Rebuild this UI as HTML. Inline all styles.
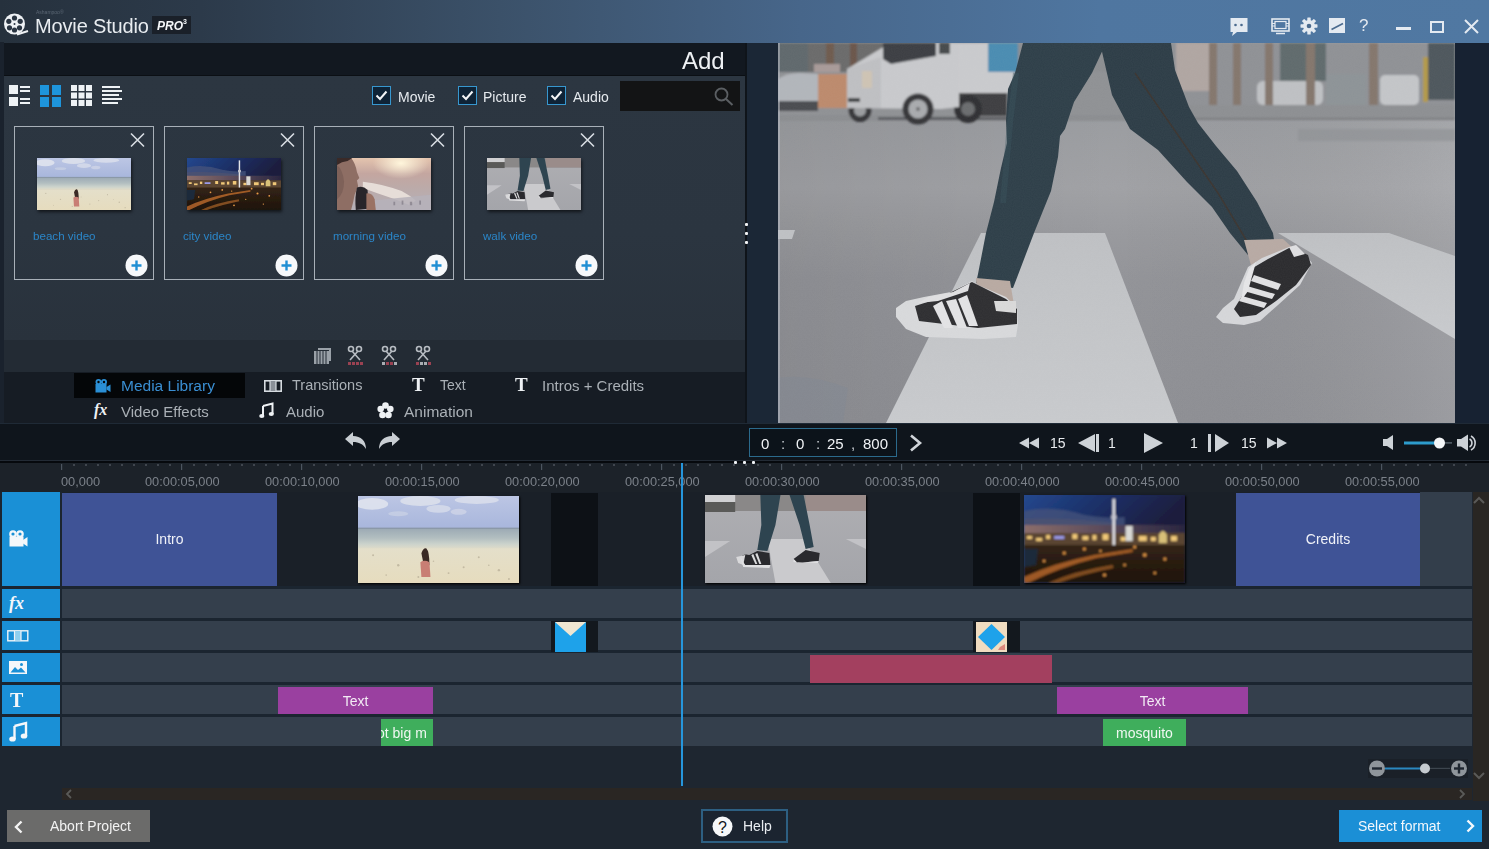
<!DOCTYPE html><html><head><meta charset="utf-8"><style>
*{margin:0;padding:0;box-sizing:border-box}
html,body{width:1489px;height:849px;overflow:hidden;background:#1e2630;font-family:"Liberation Sans",sans-serif;color:#e8ecf0}
.a{position:absolute}
.t{position:absolute;white-space:nowrap;line-height:1;will-change:transform}
svg{position:absolute;overflow:visible}
</style></head><body>
<div class="a" style="left:0;top:0;width:1489px;height:43px;background:linear-gradient(90deg,#26313d 0px,#2c3a4a 200px,#3b5169 500px,#47668a 800px,#4f76a0 1100px,#5078a2 1489px)"></div>
<svg style="left:3px;top:13px" width="26" height="23" viewBox="0 0 26 23">
<circle cx="11.5" cy="11" r="10.5" fill="#eef1f4"/>
<circle cx="11.5" cy="5" r="2.6" fill="#2a3542"/><circle cx="11.5" cy="17" r="2.6" fill="#2a3542"/>
<circle cx="5.8" cy="8.3" r="2.6" fill="#2a3542"/><circle cx="17.2" cy="8.3" r="2.6" fill="#2a3542"/>
<circle cx="6.5" cy="14.8" r="2.6" fill="#2a3542"/><circle cx="16.5" cy="14.8" r="2.6" fill="#2a3542"/>
<circle cx="11.5" cy="11" r="1" fill="#2a3542"/>
<path d="M14 21.5 L25 18" stroke="#eef1f4" stroke-width="2"/></svg>
<div class="t" style="left:36px;top:10px;font-size:5px;color:#5a6673">Ashampoo®</div>
<div class="t" style="left:35px;top:16px;font-size:20px;color:#e8ecf0;letter-spacing:-0.15px">Movie Studio</div>
<div class="a" style="left:152px;top:16px;width:39px;height:18px;background:#1a2029"></div>
<div class="t" style="left:157px;top:20px;font-size:12px;font-weight:bold;font-style:italic;color:#f4f6f8">PRO</div>
<div class="t" style="left:183px;top:18px;font-size:7px;font-weight:bold;color:#f4f6f8">3</div>
<svg style="left:1230px;top:17px" width="20" height="20" viewBox="0 0 20 20">
<rect x="0.5" y="1" width="17" height="14" fill="#e4eaf1"/><path d="M3 15 L2 19 L7 15Z" fill="#e4eaf1"/>
<circle cx="5.5" cy="8" r="1.3" fill="#4a6a8e"/><circle cx="11.5" cy="8" r="1.3" fill="#4a6a8e"/></svg>
<svg style="left:1271px;top:18px" width="20" height="17" viewBox="0 0 20 17">
<rect x="1" y="1" width="17" height="12" fill="none" stroke="#e4eaf1" stroke-width="1.6"/>
<rect x="4" y="3.5" width="11" height="7" fill="none" stroke="#e4eaf1" stroke-width="1.2"/>
<path d="M1 5.5h3M1 8h3M15 5.5h3M15 8h3" stroke="#e4eaf1" stroke-width="1"/>
<path d="M5 15.5h9" stroke="#e4eaf1" stroke-width="1.5"/></svg>
<svg style="left:1300px;top:17px" width="18" height="18" viewBox="0 0 18 18">
<g fill="#e4eaf1"><circle cx="9" cy="9" r="6"/>
<rect x="7.3" y="0.5" width="3.4" height="17" rx="0.6"/>
<rect x="7.3" y="0.5" width="3.4" height="17" rx="0.6" transform="rotate(45 9 9)"/>
<rect x="7.3" y="0.5" width="3.4" height="17" rx="0.6" transform="rotate(90 9 9)"/>
<rect x="7.3" y="0.5" width="3.4" height="17" rx="0.6" transform="rotate(135 9 9)"/></g>
<circle cx="9" cy="9" r="2.3" fill="#4a6a8e"/></svg>
<svg style="left:1329px;top:18px" width="16" height="16" viewBox="0 0 16 16">
<rect x="0" y="0" width="16" height="15" fill="#e4eaf1"/><path d="M2.5 11.5 L14 5.5" stroke="#4a6a8e" stroke-width="1.6"/></svg>
<div class="t" style="left:1359px;top:17px;font-size:17px;color:#e4eaf1">?</div>
<div class="a" style="left:1396px;top:27px;width:15px;height:3px;background:#e4eaf1"></div>
<div class="a" style="left:1430px;top:21px;width:14px;height:12px;border:2px solid #e4eaf1"></div>
<svg style="left:1464px;top:19px" width="15" height="15" viewBox="0 0 15 15"><path d="M1 1L14 14M14 1L1 14" stroke="#e4eaf1" stroke-width="2"/></svg>
<div class="a" style="left:0;top:42px;width:4px;height:381px;background:#1a222d"></div>
<div class="a" style="left:4px;top:43px;width:741px;height:32px;background:#121820"></div>
<div class="a" style="left:4px;top:75px;width:741px;height:1px;background:#0b0f14"></div>
<div class="a" style="left:4px;top:76px;width:741px;height:264px;background:linear-gradient(180deg,#2c3641 0%,#2b3540 60%,#29323c 100%)"></div>
<div class="a" style="left:4px;top:340px;width:741px;height:32px;background:#232b34"></div>
<div class="a" style="left:4px;top:372px;width:741px;height:51px;background:#161c24"></div>
<div class="t" style="left:682px;top:49px;font-size:24px;color:#eef1f4">Add</div>
<svg style="left:9px;top:85px" width="115" height="22" viewBox="0 0 115 22">
<g fill="#eef2f5"><rect x="0" y="0" width="9" height="9"/><rect x="0" y="12" width="9" height="9"/>
<rect x="11" y="1" width="10" height="2"/><rect x="11" y="5" width="10" height="2"/>
<rect x="11" y="13" width="10" height="2"/><rect x="11" y="17" width="10" height="2"/></g>
<g fill="#1e95dc"><rect x="31" y="0" width="9" height="10"/><rect x="43" y="0" width="9" height="10"/>
<rect x="31" y="12" width="9" height="10"/><rect x="43" y="12" width="9" height="10"/></g>
<g fill="#eef2f5"><rect x="62" y="0" width="6" height="6"/><rect x="69.5" y="0" width="6" height="6"/><rect x="77" y="0" width="6" height="6"/>
<rect x="62" y="7.5" width="6" height="6"/><rect x="69.5" y="7.5" width="6" height="6"/><rect x="77" y="7.5" width="6" height="6"/>
<rect x="62" y="15" width="6" height="6"/><rect x="69.5" y="15" width="6" height="6"/><rect x="77" y="15" width="6" height="6"/></g>
<g fill="#eef2f5"><rect x="93" y="1" width="18" height="2"/><rect x="93" y="5" width="20" height="2"/><rect x="93" y="9" width="17" height="2"/><rect x="93" y="13" width="20" height="2"/><rect x="93" y="17" width="16" height="2"/></g>
</svg>
<div class="a" style="left:372px;top:86px;width:19px;height:19px;border:1.5px solid #3797cf;background:#0f2336"></div>
<svg style="left:372px;top:86px" width="19" height="19" viewBox="0 0 19 19"><path d="M4.5 9.5 L8 13 L14.5 5.5" fill="none" stroke="#f2f4f6" stroke-width="2"/></svg>
<div class="t" style="left:398px;top:90px;font-size:14px;color:#e6eaee">Movie</div>
<div class="a" style="left:458px;top:86px;width:19px;height:19px;border:1.5px solid #3797cf;background:#0f2336"></div>
<svg style="left:458px;top:86px" width="19" height="19" viewBox="0 0 19 19"><path d="M4.5 9.5 L8 13 L14.5 5.5" fill="none" stroke="#f2f4f6" stroke-width="2"/></svg>
<div class="t" style="left:483px;top:90px;font-size:14px;color:#e6eaee">Picture</div>
<div class="a" style="left:547px;top:86px;width:19px;height:19px;border:1.5px solid #3797cf;background:#0f2336"></div>
<svg style="left:547px;top:86px" width="19" height="19" viewBox="0 0 19 19"><path d="M4.5 9.5 L8 13 L14.5 5.5" fill="none" stroke="#f2f4f6" stroke-width="2"/></svg>
<div class="t" style="left:573px;top:90px;font-size:14px;color:#e6eaee">Audio</div>
<div class="a" style="left:620px;top:81px;width:120px;height:30px;background:#131415"></div>
<svg style="left:714px;top:87px" width="20" height="19" viewBox="0 0 20 19"><circle cx="7.5" cy="7.5" r="6" fill="none" stroke="#5b5f63" stroke-width="1.8"/><path d="M12 12 L18.5 18" stroke="#5b5f63" stroke-width="2"/></svg>
<div class="a" style="left:14px;top:126px;width:140px;height:154px;border:1.5px solid #a8b0b8"></div>
<svg style="left:130px;top:133px" width="15" height="14" viewBox="0 0 15 14"><path d="M1 0.5L14 13.5M14 0.5L1 13.5" stroke="#d8dde2" stroke-width="1.6"/></svg>
<div class="a" style="left:37px;top:158px;width:94px;height:52px;box-shadow:1px 2px 3px rgba(0,0,0,0.6);overflow:hidden"><svg style="left:0;top:0" width="94" height="52" viewBox="0 0 160 88" preserveAspectRatio="none"><defs><linearGradient id="bsc0" x1="0" y1="0" x2="0" y2="1"><stop offset="0" stop-color="#bcc6e4"/><stop offset="1" stop-color="#a8b6dc"/></linearGradient>
<linearGradient id="bwc0" x1="0" y1="0" x2="0" y2="1"><stop offset="0" stop-color="#9caab4"/><stop offset="0.45" stop-color="#b2bec0"/><stop offset="0.75" stop-color="#ccd3cc"/><stop offset="1" stop-color="#e2ddc8"/></linearGradient>
<linearGradient id="bdc0" x1="0" y1="0" x2="0" y2="1"><stop offset="0" stop-color="#e4dfca"/><stop offset="1" stop-color="#e6dcbe"/></linearGradient></defs>
<rect width="160" height="33" fill="url(#bsc0)"/>
<ellipse cx="14" cy="8" rx="16" ry="6" fill="#e2e5ee" opacity="0.85"/><ellipse cx="62" cy="5" rx="20" ry="5" fill="#e0e3ec" opacity="0.8"/>
<ellipse cx="80" cy="13" rx="12" ry="4" fill="#dde1ec" opacity="0.7"/><ellipse cx="118" cy="4" rx="22" ry="4" fill="#e2e5ee" opacity="0.7"/>
<ellipse cx="100" cy="16" rx="8" ry="3" fill="#d8dcea" opacity="0.6"/><ellipse cx="40" cy="18" rx="10" ry="2.5" fill="#d6dbe8" opacity="0.5"/>
<rect y="32" width="160" height="1" fill="#8a98a6"/>
<rect y="33" width="160" height="21" fill="url(#bwc0)"/>
<rect y="53" width="160" height="35" fill="url(#bdc0)"/>
<g fill="#a89e88" opacity="0.55"><circle cx="15" cy="60" r="1"/><circle cx="40" cy="70" r="1.2"/><circle cx="90" cy="78" r="1"/><circle cx="120" cy="62" r="1"/><circle cx="140" cy="75" r="1.2"/><circle cx="60" cy="82" r="1"/><circle cx="105" cy="72" r="1"/><circle cx="28" cy="80" r="0.8"/><circle cx="75" cy="66" r="0.8"/><circle cx="150" cy="84" r="1"/><circle cx="130" cy="70" r="0.8"/></g>
<path d="M63 58 Q65 52 68 53 Q71 56 71 70 L65 68Z" fill="#3a2a25"/>
<path d="M62 67 Q66 64 71 67 L72 82 L63 82Z" fill="#c87e74"/></svg></div>
<div class="t" style="left:33px;top:230px;font-size:11.6px;color:#2b86c8">beach video</div>
<svg style="left:125px;top:254px" width="23" height="23" viewBox="0 0 23 23"><circle cx="11.5" cy="11.5" r="11" fill="#f6f8fa"/><path d="M11.5 6.5v10M6.5 11.5h10" stroke="#1e8ed4" stroke-width="2.4"/></svg>
<div class="a" style="left:164px;top:126px;width:140px;height:154px;border:1.5px solid #a8b0b8"></div>
<svg style="left:280px;top:133px" width="15" height="14" viewBox="0 0 15 14"><path d="M1 0.5L14 13.5M14 0.5L1 13.5" stroke="#d8dde2" stroke-width="1.6"/></svg>
<div class="a" style="left:187px;top:158px;width:94px;height:52px;box-shadow:1px 2px 3px rgba(0,0,0,0.6);overflow:hidden"><svg style="left:0;top:0" width="94" height="52" viewBox="0 0 160 88" preserveAspectRatio="none"><defs><linearGradient id="csc1" x1="0" y1="0" x2="1" y2="0.2"><stop offset="0" stop-color="#24488e"/><stop offset="0.55" stop-color="#1a2e64"/><stop offset="1" stop-color="#1a1e3e"/></linearGradient>
<linearGradient id="cbc1" x1="0" y1="0" x2="0" y2="1"><stop offset="0" stop-color="#3a2818"/><stop offset="1" stop-color="#1e140c"/></linearGradient>
<linearGradient id="chc1" x1="0" y1="0" x2="1" y2="0"><stop offset="0" stop-color="#8c6e6a"/><stop offset="0.5" stop-color="#5a4a5a"/><stop offset="1" stop-color="#2a2640"/></linearGradient>
<filter id="cfc1" x="-5%" y="-5%" width="110%" height="110%"><feGaussianBlur stdDeviation="0.9"/></filter></defs>
<rect width="160" height="88" fill="url(#csc1)"/>
<g filter="url(#cfc1)">
<rect width="160" height="30" fill="url(#csc1)"/>
<path d="M0 16 Q30 10 60 20 Q80 24 100 22 L100 30 Q60 32 0 28Z" fill="#44527a" opacity="0.8"/>
<path d="M0 24 Q40 22 90 28 L90 34 L0 34Z" fill="#4e5270" opacity="0.8"/>
<rect y="30" width="160" height="10" fill="url(#chc1)"/>
<rect y="38" width="160" height="50" fill="url(#cbc1)"/>
<rect y="38" width="160" height="12" fill="#5a4432"/>
<g fill="#f0c878"><rect x="3" y="41" width="5" height="3"/><rect x="12" y="43" width="6" height="3"/><rect x="22" y="40" width="4" height="4"/><rect x="30" y="41" width="10" height="3" fill="#9a9ae8"/><rect x="48" y="39" width="5" height="5"/><rect x="58" y="41" width="6" height="4"/><rect x="68" y="40" width="4" height="5"/><rect x="78" y="39" width="6" height="6"/><rect x="96" y="42" width="5" height="4"/><rect x="114" y="41" width="8" height="5"/><rect x="126" y="42" width="5" height="4"/><rect x="146" y="41" width="6" height="5"/></g>
<g fill="#e89a48"><circle cx="40" cy="58" r="1.5"/><circle cx="60" cy="54" r="1.5"/><circle cx="76" cy="56" r="1.2"/><circle cx="110" cy="52" r="1.5"/><circle cx="120" cy="60" r="1.8"/><circle cx="140" cy="64" r="1.5"/><circle cx="80" cy="80" r="1.5"/><circle cx="130" cy="78" r="1.2"/><circle cx="100" cy="70" r="1.2"/><circle cx="20" cy="66" r="1.2"/></g>
<path d="M0 82 Q30 68 70 60 L108 54 L108 57 L72 63 Q36 72 4 88 L0 88Z" fill="#c8702e" opacity="0.75"/>
<path d="M24 88 Q50 76 88 70 L89 73 Q58 79 34 88Z" fill="#d07a30" opacity="0.55"/>
<path d="M0 54 L14 54 L12 70 L0 72Z" fill="#1e2a3a"/>
<rect x="88" y="4" width="2.5" height="46" fill="#e4e4e8"/><circle cx="89.3" cy="22" r="2.6" fill="#c8c8d0"/>
<rect x="101" y="31" width="7" height="15" fill="#d8d8d4"/><path d="M134 40 Q138 32 142 40 L142 48 L134 48Z" fill="#d8c078"/>
</g></svg></div>
<div class="t" style="left:183px;top:230px;font-size:11.6px;color:#2b86c8">city video</div>
<svg style="left:275px;top:254px" width="23" height="23" viewBox="0 0 23 23"><circle cx="11.5" cy="11.5" r="11" fill="#f6f8fa"/><path d="M11.5 6.5v10M6.5 11.5h10" stroke="#1e8ed4" stroke-width="2.4"/></svg>
<div class="a" style="left:314px;top:126px;width:140px;height:154px;border:1.5px solid #a8b0b8"></div>
<svg style="left:430px;top:133px" width="15" height="14" viewBox="0 0 15 14"><path d="M1 0.5L14 13.5M14 0.5L1 13.5" stroke="#d8dde2" stroke-width="1.6"/></svg>
<div class="a" style="left:337px;top:158px;width:94px;height:52px;box-shadow:1px 2px 3px rgba(0,0,0,0.6);overflow:hidden"><svg style="left:0;top:0" width="94" height="52" viewBox="0 0 160 88" preserveAspectRatio="none"><defs><linearGradient id="msc2" x1="0" y1="0" x2="0" y2="1"><stop offset="0" stop-color="#e4c4ae"/><stop offset="0.3" stop-color="#c4a6a0"/><stop offset="0.55" stop-color="#bcaaa8"/><stop offset="1" stop-color="#b4b0b8"/></linearGradient>
<radialGradient id="mnc2" cx="0.68" cy="0.1" r="0.3"><stop offset="0" stop-color="#fff6dc"/><stop offset="1" stop-color="#fff6dc" stop-opacity="0"/></radialGradient></defs>
<rect width="160" height="88" fill="url(#msc2)"/>
<rect width="160" height="88" fill="url(#mnc2)"/>
<path d="M44 40 Q80 44 110 56 Q125 64 134 72 L124 80 Q96 68 70 60 Q52 54 44 50Z" fill="#e6ddd8"/>
<path d="M60 72 L160 62 L160 88 L62 88Z" fill="#b6b2ba" opacity="0.85"/>
<g fill="#6a6470" opacity="0.5"><rect x="96" y="74" width="3" height="6"/><rect x="110" y="72" width="3" height="7"/><rect x="124" y="74" width="4" height="6"/><rect x="140" y="72" width="3" height="7"/></g>
<path d="M0 0 L24 0 Q32 10 34 24 L38 34 L34 38 L36 48 L30 62 Q28 74 24 88 L0 88Z" fill="#8e6e64"/>
<path d="M0 0 L26 0 L18 5 Q8 6 0 12Z" fill="#3a2a28"/>
<path d="M0 12 Q10 20 12 40 Q12 60 0 70Z" fill="#6e544e" opacity="0.5"/>
<path d="M34 50 Q44 46 52 54 L54 86 L32 88 Q30 66 34 50Z" fill="#28252a"/>
<path d="M50 60 Q60 58 64 70 L66 88 L50 88Z" fill="#9a7264"/></svg></div>
<div class="t" style="left:333px;top:230px;font-size:11.6px;color:#2b86c8">morning video</div>
<svg style="left:425px;top:254px" width="23" height="23" viewBox="0 0 23 23"><circle cx="11.5" cy="11.5" r="11" fill="#f6f8fa"/><path d="M11.5 6.5v10M6.5 11.5h10" stroke="#1e8ed4" stroke-width="2.4"/></svg>
<div class="a" style="left:464px;top:126px;width:140px;height:154px;border:1.5px solid #a8b0b8"></div>
<svg style="left:580px;top:133px" width="15" height="14" viewBox="0 0 15 14"><path d="M1 0.5L14 13.5M14 0.5L1 13.5" stroke="#d8dde2" stroke-width="1.6"/></svg>
<div class="a" style="left:487px;top:158px;width:94px;height:52px;box-shadow:1px 2px 3px rgba(0,0,0,0.6);overflow:hidden"><svg style="left:0;top:0" width="94" height="52" viewBox="0 0 160 88" preserveAspectRatio="none"><defs><linearGradient id="wrc3" x1="0" y1="0" x2="0" y2="1"><stop offset="0" stop-color="#aeaeb2"/><stop offset="1" stop-color="#a4a5aa"/></linearGradient></defs>
<rect width="160" height="88" fill="url(#wrc3)"/>
<rect width="160" height="16" fill="#8a8888"/>
<rect width="30" height="7" fill="#d0d0d2"/><rect y="7" width="30" height="10" fill="#5a5a58"/>
<rect x="100" width="60" height="16" fill="#9a8c8a"/>
<path d="M62 44 L98 44 L125 88 L70 88Z" fill="#cacacd"/>
<path d="M0 46 L25 46 L0 62Z" fill="#c2c2c6"/><path d="M140 44 L160 44 L160 54Z" fill="#c2c2c6"/>
<path d="M55 0 L75 0 L70 30 L62 56 L52 55 L56 30Z" fill="#2e4450"/>
<path d="M84 0 L98 0 L104 30 L108 52 L100 54 L94 30Z" fill="#2e4450"/>
<path d="M33 64 Q38 58 44 60 L52 56 L64 58 L65 70 L40 70Z" fill="#2a2a2e"/><path d="M31 62 L40 60 L38 70 L33 68Z" fill="#d8d8da"/><path d="M35 62 L40 70 L65 70 L64 73 L38 72Z" fill="#e0e0e2"/>
<g fill="#dcdcde"><path d="M46 60 L48 59 L52 69 L50 69Z"/><path d="M50 59 L52 58 L56 69 L54 69Z"/></g>
<path d="M88 64 L100 55 L114 58 L113 66 L92 68Z" fill="#2a2a2e"/><path d="M88 64 L92 68 L113 66 L112 68 L88 67Z" fill="#e0e0e2"/></svg></div>
<div class="t" style="left:483px;top:230px;font-size:11.6px;color:#2b86c8">walk video</div>
<svg style="left:575px;top:254px" width="23" height="23" viewBox="0 0 23 23"><circle cx="11.5" cy="11.5" r="11" fill="#f6f8fa"/><path d="M11.5 6.5v10M6.5 11.5h10" stroke="#1e8ed4" stroke-width="2.4"/></svg>
<svg style="left:313px;top:345px" width="125" height="22" viewBox="0 0 125 22">
<g fill="#9aa1a8"><rect x="1" y="6" width="15" height="13"/><path d="M5 3h13v13h-2V5H5z"/></g>
<g stroke="#232b34" stroke-width="1"><path d="M4 6v13M7 6v13M10 6v13M13 6v13"/></g>
<g stroke="#b7bcc2" stroke-width="1.6" fill="none"><circle cx="38" cy="4" r="2.5"/><circle cx="46" cy="4" r="2.5"/><path d="M39 6L47 15M45 6L37 15"/></g>
<g fill="#9a4252"><rect x="35" y="17" width="3" height="3"/><rect x="39" y="17" width="3" height="3"/><rect x="43" y="17" width="3" height="3"/><rect x="47" y="17" width="3" height="3"/></g>
<g stroke="#b7bcc2" stroke-width="1.6" fill="none"><circle cx="72" cy="4" r="2.5"/><circle cx="80" cy="4" r="2.5"/><path d="M73 6L81 15M79 6L71 15"/></g>
<g><rect x="69" y="17" width="3" height="3" fill="#a9aeb3"/><rect x="73" y="17" width="3" height="3" fill="#9a4252"/><rect x="77" y="17" width="3" height="3" fill="#9a4252"/><rect x="81" y="17" width="3" height="3" fill="#a9aeb3"/></g>
<g stroke="#b7bcc2" stroke-width="1.6" fill="none"><circle cx="106" cy="4" r="2.5"/><circle cx="114" cy="4" r="2.5"/><path d="M107 6L115 15M113 6L105 15"/></g>
<g><rect x="103" y="17" width="3" height="3" fill="#9a4252"/><rect x="107" y="17" width="3" height="3" fill="#a9aeb3"/><rect x="111" y="17" width="3" height="3" fill="#a9aeb3"/><rect x="115" y="17" width="3" height="3" fill="#9a4252"/></g>
</svg>
<div class="a" style="left:74px;top:373px;width:171px;height:25px;background:#040608"></div>
<svg style="left:95px;top:379px" width="16" height="14" viewBox="0 0 16 14"><g fill="#2a8fd6"><circle cx="3.5" cy="3" r="3"/><circle cx="9" cy="3" r="3"/><rect x="0.5" y="5" width="11" height="8.5"/><path d="M11.5 8 L15.5 5.5 V13 L11.5 10.5z"/></g><circle cx="3.5" cy="3" r="1.2" fill="#040608"/><circle cx="9" cy="3" r="1.2" fill="#040608"/></svg>
<div class="t" style="left:121px;top:378px;font-size:15.5px;color:#3a8ed2">Media Library</div>
<svg style="left:94px;top:402px" width="18" height="17" viewBox="0 0 18 17"><text x="0" y="13" font-family="Liberation Serif" font-style="italic" font-weight="bold" font-size="16" fill="#eef1f4">fx</text></svg>
<div class="t" style="left:121px;top:404px;font-size:15px;color:#aab0b6">Video Effects</div>
<svg style="left:264px;top:380px" width="18" height="12" viewBox="0 0 18 12"><rect x="0.8" y="0.8" width="16.4" height="10.4" fill="none" stroke="#d6dbe0" stroke-width="1.6"/><rect x="6" y="1" width="6" height="10" fill="#8a9098"/><path d="M6 1v10M12 1v10" stroke="#d6dbe0" stroke-width="1.2"/></svg>
<div class="t" style="left:292px;top:378px;font-size:14.5px;color:#aab0b6">Transitions</div>
<svg style="left:259px;top:403px" width="15" height="15" viewBox="0 0 15 15"><path d="M4 3 L13.5 0.5 V11" fill="none" stroke="#eef1f4" stroke-width="2"/><path d="M4 3V13" stroke="#eef1f4" stroke-width="2"/><ellipse cx="2.8" cy="13" rx="2.6" ry="2" fill="#eef1f4"/><ellipse cx="12.3" cy="11" rx="2.6" ry="2" fill="#eef1f4"/></svg>
<div class="t" style="left:286px;top:404px;font-size:15px;color:#aab0b6">Audio</div>
<div class="t" style="left:412px;top:375px;font-size:19px;font-weight:bold;font-family:'Liberation Serif',serif;color:#eef1f4">T</div>
<div class="t" style="left:440px;top:378px;font-size:14px;color:#aab0b6">Text</div>
<div class="t" style="left:515px;top:375px;font-size:19px;font-weight:bold;font-family:'Liberation Serif',serif;color:#eef1f4">T</div>
<div class="t" style="left:542px;top:378px;font-size:15px;color:#aab0b6">Intros + Credits</div>
<svg style="left:377px;top:402px" width="17" height="17" viewBox="0 0 17 17"><g fill="#eef1f4"><circle cx="8.5" cy="3.5" r="3.3"/><circle cx="13.3" cy="7" r="3.3"/><circle cx="11.5" cy="13" r="3.3"/><circle cx="5.5" cy="13" r="3.3"/><circle cx="3.7" cy="7" r="3.3"/></g><circle cx="8.5" cy="8.8" r="1.8" fill="#161c24"/></svg>
<div class="t" style="left:404px;top:404px;font-size:15.5px;color:#aab0b6">Animation</div>
<div class="a" style="left:745px;top:43px;width:2px;height:380px;background:#0f141a"></div>
<div class="a" style="left:747px;top:43px;width:31px;height:380px;background:#1b2736"></div>
<div class="a" style="left:1455px;top:43px;width:34px;height:380px;background:#172232"></div>
<div class="a" style="left:778px;top:43px;width:677px;height:380px;overflow:hidden;background:#8e9194"><svg style="left:0;top:0" width="677" height="380" viewBox="0 0 677 380">
<defs>
<linearGradient id="rd" x1="0" y1="0" x2="0" y2="1"><stop offset="0.2" stop-color="#9a9ca0"/><stop offset="0.38" stop-color="#a0a1a5"/><stop offset="0.5" stop-color="#98999d"/><stop offset="0.62" stop-color="#929398"/><stop offset="1" stop-color="#8f9095"/></linearGradient>
<linearGradient id="st" x1="0" y1="0" x2="0" y2="1"><stop offset="0" stop-color="#bfc1c4"/><stop offset="1" stop-color="#c9cbce"/></linearGradient>
<filter id="nz" x="0" y="0" width="100%" height="100%"><feTurbulence type="fractalNoise" baseFrequency="0.9" numOctaves="1" seed="3"/><feColorMatrix values="0 0 0 0 0.5  0 0 0 0 0.5  0 0 0 0 0.5  0 0 0 0.12 0"/><feComposite in2="SourceGraphic" operator="in"/></filter>
<filter id="bgb" x="-2%" y="-5%" width="104%" height="110%"><feGaussianBlur stdDeviation="0.8"/></filter>
</defs>
<rect width="677" height="380" fill="url(#rd)"/>
<linearGradient id="rh" x1="0" y1="0" x2="1" y2="0"><stop offset="0" stop-color="#000" stop-opacity="0.06"/><stop offset="0.5" stop-color="#000" stop-opacity="0"/><stop offset="1" stop-color="#fff" stop-opacity="0.1"/></linearGradient>
<rect y="0" width="677" height="380" fill="url(#rh)"/>
<g filter="url(#bgb)"><!-- background band -->
<rect x="0" y="0" width="677" height="76" fill="#8c8e91"/>
<rect x="0" y="0" width="105" height="30" fill="#6a6a6a"/>
<rect x="0" y="0" width="30" height="30" fill="#5e686c"/>
<rect x="48" y="0" width="8" height="28" fill="#6e5a4e"/><rect x="72" y="0" width="7" height="26" fill="#6a5448"/>
<rect x="36" y="21" width="26" height="8" fill="#a89a98"/>
<rect x="0" y="29" width="392" height="44" fill="#8f9194"/>
<path d="M0 36 Q8 30 22 30 L40 31 L40 62 L0 64Z" fill="#b2b6bb"/>
<rect x="0" y="58" width="40" height="10" fill="#4a4c50"/>
<rect x="40" y="31" width="29" height="34" fill="#bd8a6c"/>
<rect x="0" y="72" width="392" height="6" fill="#8b8d90"/>
<rect x="100" y="74" width="130" height="3" fill="#5a5c60"/>
<circle cx="82" cy="67.5" r="11.5" fill="#343538"/><circle cx="82" cy="67.5" r="6" fill="#9a9c9f"/>
<rect x="180" y="49" width="49" height="24" fill="#3c3d40"/>
<circle cx="190" cy="66" r="14" fill="#2e2f32"/><circle cx="190" cy="66" r="7" fill="#6a6c6e"/>
<path d="M69 26 L112 0 L181 0 L181 64 L163 66 L69 65Z" fill="#c9cacd"/>
<path d="M69 26 L103 14 L103 65 L69 65Z" fill="#bfc0c3"/>
<path d="M105 0 L158 0 L158 13 L113 21 L105 16Z" fill="#3a3d42"/>
<rect x="161" y="0" width="11" height="11" fill="#45484c"/>
<rect x="84" y="28" width="10" height="17" fill="#cfc4b4"/>
<rect x="70" y="55" width="12" height="4" fill="#3a3c40"/>
<rect x="181" y="0" width="55" height="50" fill="#cacbce"/>
<rect x="210" y="0" width="30" height="29" fill="#4a8cb2"/>
<circle cx="140" cy="66" r="15.5" fill="#343538"/><circle cx="140" cy="66" r="9.5" fill="#a9abae"/><circle cx="140" cy="66" r="2" fill="#6a6c6e"/>
<rect x="392" y="0" width="285" height="62" fill="#8f9195"/>
<rect x="398" y="0" width="40" height="48" fill="#b0a6a2"/>
<rect x="502" y="0" width="46" height="38" fill="#5e6b6c"/>
<rect x="650" y="0" width="27" height="57" fill="#4e565c"/>
<rect x="479" y="38" width="66" height="24" rx="6" fill="#bfc1c4"/>
<rect x="548" y="31" width="40" height="42" fill="#8d9397"/>
<rect x="602" y="32" width="39" height="30" rx="5" fill="#c4c6c9"/>
<rect x="645" y="14" width="5" height="45" fill="#b39a48"/>
<g fill="#84766c"><rect x="431" y="0" width="8" height="70"/><rect x="455" y="0" width="8" height="70"/><rect x="487" y="0" width="8" height="72"/><rect x="528" y="0" width="9" height="75"/><rect x="591" y="0" width="9" height="74"/></g>
<rect x="392" y="62" width="285" height="14" fill="#8d8f92"/>
<rect x="392" y="75" width="285" height="2" fill="#7a7c80"/>

<rect x="520" y="86" width="157" height="12" fill="#8f9195" opacity="0.7"/>
</g>
<!-- crosswalk -->
<path d="M203 190 L327 190 L400 380 L108 380Z" fill="url(#st)"/>
<path d="M500 190 L611 190 L677 213 L677 296Z" fill="url(#st)"/>
<path d="M0 187 L17 187 L14 196 L0 196Z" fill="#bfc1c4"/>
<path d="M0 335 Q30 330 70 345 L65 380 L0 380Z" fill="#7e8694" opacity="0.35"/>
<!-- legs -->
<path d="M245 0 L237 30 L230 46 L228 77 L229 100 L223 125 L216 159 L208 190 L200 231 L198 240 L235 245 L256 190 L273 148 L280 114 L282 93 L287 86 L296 59 L314 30 L328 0Z" fill="#2d3e48"/>
<path d="M322 0 L393 0 L397 27 L411 64 L420 80 L438 103 L459 128 L479 159 L495 190 L498 210 L470 212 L452 190 L434 164 L409 139 L380 107 L352 86 L334 52Z" fill="#2c3c46"/>
<path d="M357 30 L440 150 L470 200" fill="none" stroke="#3a3430" stroke-width="1.5"/>
<path d="M238 30 L232 80 L225 160" fill="none" stroke="#3a5660" stroke-width="6" opacity="0.35"/>
<!-- left shoe -->
<path d="M198 235 L232 238 L236 262 L200 264Z" fill="#b9aaa2"/>
<path d="M118 265 L128 258 L146 254 L173 249 L194 238 L200 242 L228 254 L239 265 L240 281 L238 294 L205 296 L148 294 L128 286 L118 274Z" fill="#d9dadc"/>
<path d="M137 263 L159 256 L194 239 L228 256 L239 266 L239 281 L200 285 L141 278Z" fill="#2d2d30"/>
<g fill="#e4e4e6"><path d="M155 263 L164 258 L175 285 L166 285Z"/><path d="M168 258 L178 256 L189 285 L180 285Z"/><path d="M180 256 L189 252 L200 283 L191 283Z"/></g>
<path d="M140 260 L150 254 L175 249 L192 240 L190 248 L160 258Z" fill="#e0e0e2"/>
<path d="M216 258 L238 258 L238 270 L218 268Z" fill="#dadada"/>
<!-- right shoe -->
<path d="M466 197 L505 196 L516 206 L500 222 L474 226Z" fill="#b8aaa4"/>
<path d="M438 274 L445 265 L456 256 L470 224 L484 215 L511 204 L527 211 L534 220 L522 242 L500 262 L482 278 L466 282 L445 280Z" fill="#d6d7da"/>
<path d="M456 266 L466 250 L473 226 L490 216 L513 204 L530 212 L533 222 L518 242 L498 258 L478 272 L462 274Z" fill="#2a2a2d"/>
<g fill="#e2e2e4"><path d="M476 232 L503 241 L500 247 L473 238Z"/><path d="M469 243 L497 251 L494 256 L466 248Z"/><path d="M464 253 L489 260 L486 265 L461 258Z"/></g>
<path d="M471 226 L478 219 L470 248 L463 258 L466 240Z" fill="#e6e6e8"/>
<path d="M511 204 L518 202 L527 211 L516 214Z" fill="#e0e0e2"/>
<rect width="677" height="380" filter="url(#nz)" opacity="0.6"/>
</svg><div class="a" style="left:0;top:0;width:2px;height:380px;background:rgba(190,196,206,0.45)"></div></div>
<div class="a" style="left:745px;top:223px;width:3px;height:3px;border-radius:1px;background:#f0f2f4;box-shadow:0 9px 0 #f0f2f4,0 18px 0 #f0f2f4"></div>
<div class="a" style="left:0;top:423px;width:1489px;height:38px;background:#0f151c"></div>
<div class="a" style="left:0;top:423px;width:1489px;height:1px;background:#1f2a36"></div>
<svg style="left:345px;top:432px" width="56" height="20" viewBox="0 0 56 20">
<path d="M0 7 L8 0 V4 C16 4 21 9 21 17 C18 12 14 10 8 10 V14Z" fill="#c9ced3"/>
<path d="M55 7 L47 0 V4 C39 4 34 9 34 17 C37 12 41 10 47 10 V14Z" fill="#c9ced3"/></svg>
<div class="a" style="left:749px;top:428px;width:148px;height:29px;border:1.5px solid #2b6a8c;background:#0c131a"></div>
<div class="t" style="left:761px;top:436px;font-size:15px;color:#f0f3f6">0</div>
<div class="t" style="left:781px;top:436px;font-size:15px;color:#c8cdd2">:</div>
<div class="t" style="left:796px;top:436px;font-size:15px;color:#f0f3f6">0</div>
<div class="t" style="left:816px;top:436px;font-size:15px;color:#c8cdd2">:</div>
<div class="t" style="left:827px;top:436px;font-size:15px;color:#f0f3f6">25</div>
<div class="t" style="left:851px;top:436px;font-size:15px;color:#c8cdd2">,</div>
<div class="t" style="left:863px;top:436px;font-size:15px;color:#f0f3f6">800</div>
<svg style="left:909px;top:434px" width="14" height="18" viewBox="0 0 14 18"><path d="M2 1.5 L11 9 L2 16.5" fill="none" stroke="#d0d5da" stroke-width="2.6"/></svg>
<svg style="left:1019px;top:432px" width="270" height="22" viewBox="0 0 270 22">
<path d="M0 11 L10 5.5 V16.5Z M10 11 L20 5.5 V16.5Z" fill="#cdd2d7"/>
<path d="M59 11 L76 2 V20Z" fill="#cdd2d7"/><rect x="77" y="2" width="3" height="18" fill="#cdd2d7"/>
<path d="M125 1 L144 11 L125 21Z" fill="#cdd2d7"/>
<rect x="189" y="2" width="3" height="18" fill="#cdd2d7"/><path d="M196 2 L210 11 L196 20Z" fill="#cdd2d7"/>
<path d="M248 5.5 L258 11 L248 16.5Z M258 5.5 L268 11 L258 16.5Z" fill="#cdd2d7"/></svg>
<div class="t" style="left:1050px;top:436px;font-size:14px;color:#e8ebee">15</div>
<div class="t" style="left:1108px;top:436px;font-size:14px;color:#e8ebee">1</div>
<div class="t" style="left:1190px;top:436px;font-size:14px;color:#e8ebee">1</div>
<div class="t" style="left:1241px;top:436px;font-size:14px;color:#e8ebee">15</div>
<svg style="left:1383px;top:434px" width="95" height="18" viewBox="0 0 95 18">
<path d="M0 5 H4 L10 1 V16 L4 12 H0Z" fill="#cdd2d7"/>
<rect x="21" y="7.5" width="36" height="3" fill="#2d9ccc"/><rect x="57" y="8.2" width="12" height="1.4" fill="#5b6670"/>
<circle cx="56.5" cy="9" r="5.5" fill="#f4f6f8"/>
<path d="M74 5 H78 L85 0.5 V17 L78 12.5 H74Z" fill="#cdd2d7"/>
<path d="M86.5 5 A4.5 4.5 0 0 1 86.5 13" fill="none" stroke="#cdd2d7" stroke-width="1.6"/>
<path d="M88 2 A8 8 0 0 1 88 16" fill="none" stroke="#cdd2d7" stroke-width="1.6"/></svg>
<div class="a" style="left:0;top:460px;width:1489px;height:1px;background:#232b35"></div><div class="a" style="left:0;top:461px;width:1489px;height:2px;background:#06090d"></div>
<div class="a" style="left:0;top:463px;width:1489px;height:29px;background:#1c2229"></div>
<svg style="left:0;top:0" width="1489" height="849" viewBox="0 0 1489 849"><rect x="61.0" y="464" width="1.2" height="6" fill="#4c5560"/><rect x="73.0" y="464" width="2" height="2" fill="#40464e"/><rect x="85.0" y="464" width="2" height="2" fill="#40464e"/><rect x="97.0" y="464" width="2" height="2" fill="#40464e"/><rect x="109.0" y="464" width="2" height="2" fill="#40464e"/><rect x="121.0" y="464" width="2" height="2" fill="#40464e"/><rect x="133.0" y="464" width="2" height="2" fill="#40464e"/><rect x="145.0" y="464" width="2" height="2" fill="#40464e"/><rect x="157.0" y="464" width="2" height="2" fill="#40464e"/><rect x="169.0" y="464" width="2" height="2" fill="#40464e"/><rect x="181.0" y="464" width="1.2" height="6" fill="#4c5560"/><rect x="193.0" y="464" width="2" height="2" fill="#40464e"/><rect x="205.0" y="464" width="2" height="2" fill="#40464e"/><rect x="217.0" y="464" width="2" height="2" fill="#40464e"/><rect x="229.0" y="464" width="2" height="2" fill="#40464e"/><rect x="241.0" y="464" width="2" height="2" fill="#40464e"/><rect x="253.0" y="464" width="2" height="2" fill="#40464e"/><rect x="265.0" y="464" width="2" height="2" fill="#40464e"/><rect x="277.0" y="464" width="2" height="2" fill="#40464e"/><rect x="289.0" y="464" width="2" height="2" fill="#40464e"/><rect x="301.0" y="464" width="1.2" height="6" fill="#4c5560"/><rect x="313.0" y="464" width="2" height="2" fill="#40464e"/><rect x="325.0" y="464" width="2" height="2" fill="#40464e"/><rect x="337.0" y="464" width="2" height="2" fill="#40464e"/><rect x="349.0" y="464" width="2" height="2" fill="#40464e"/><rect x="361.0" y="464" width="2" height="2" fill="#40464e"/><rect x="373.0" y="464" width="2" height="2" fill="#40464e"/><rect x="385.0" y="464" width="2" height="2" fill="#40464e"/><rect x="397.0" y="464" width="2" height="2" fill="#40464e"/><rect x="409.0" y="464" width="2" height="2" fill="#40464e"/><rect x="421.0" y="464" width="1.2" height="6" fill="#4c5560"/><rect x="433.0" y="464" width="2" height="2" fill="#40464e"/><rect x="445.0" y="464" width="2" height="2" fill="#40464e"/><rect x="457.0" y="464" width="2" height="2" fill="#40464e"/><rect x="469.0" y="464" width="2" height="2" fill="#40464e"/><rect x="481.0" y="464" width="2" height="2" fill="#40464e"/><rect x="493.0" y="464" width="2" height="2" fill="#40464e"/><rect x="505.0" y="464" width="2" height="2" fill="#40464e"/><rect x="517.0" y="464" width="2" height="2" fill="#40464e"/><rect x="529.0" y="464" width="2" height="2" fill="#40464e"/><rect x="541.0" y="464" width="1.2" height="6" fill="#4c5560"/><rect x="553.0" y="464" width="2" height="2" fill="#40464e"/><rect x="565.0" y="464" width="2" height="2" fill="#40464e"/><rect x="577.0" y="464" width="2" height="2" fill="#40464e"/><rect x="589.0" y="464" width="2" height="2" fill="#40464e"/><rect x="601.0" y="464" width="2" height="2" fill="#40464e"/><rect x="613.0" y="464" width="2" height="2" fill="#40464e"/><rect x="625.0" y="464" width="2" height="2" fill="#40464e"/><rect x="637.0" y="464" width="2" height="2" fill="#40464e"/><rect x="649.0" y="464" width="2" height="2" fill="#40464e"/><rect x="661.0" y="464" width="1.2" height="6" fill="#4c5560"/><rect x="673.0" y="464" width="2" height="2" fill="#40464e"/><rect x="685.0" y="464" width="2" height="2" fill="#40464e"/><rect x="697.0" y="464" width="2" height="2" fill="#40464e"/><rect x="709.0" y="464" width="2" height="2" fill="#40464e"/><rect x="721.0" y="464" width="2" height="2" fill="#40464e"/><rect x="733.0" y="464" width="2" height="2" fill="#40464e"/><rect x="745.0" y="464" width="2" height="2" fill="#40464e"/><rect x="757.0" y="464" width="2" height="2" fill="#40464e"/><rect x="769.0" y="464" width="2" height="2" fill="#40464e"/><rect x="781.0" y="464" width="1.2" height="6" fill="#4c5560"/><rect x="793.0" y="464" width="2" height="2" fill="#40464e"/><rect x="805.0" y="464" width="2" height="2" fill="#40464e"/><rect x="817.0" y="464" width="2" height="2" fill="#40464e"/><rect x="829.0" y="464" width="2" height="2" fill="#40464e"/><rect x="841.0" y="464" width="2" height="2" fill="#40464e"/><rect x="853.0" y="464" width="2" height="2" fill="#40464e"/><rect x="865.0" y="464" width="2" height="2" fill="#40464e"/><rect x="877.0" y="464" width="2" height="2" fill="#40464e"/><rect x="889.0" y="464" width="2" height="2" fill="#40464e"/><rect x="901.0" y="464" width="1.2" height="6" fill="#4c5560"/><rect x="913.0" y="464" width="2" height="2" fill="#40464e"/><rect x="925.0" y="464" width="2" height="2" fill="#40464e"/><rect x="937.0" y="464" width="2" height="2" fill="#40464e"/><rect x="949.0" y="464" width="2" height="2" fill="#40464e"/><rect x="961.0" y="464" width="2" height="2" fill="#40464e"/><rect x="973.0" y="464" width="2" height="2" fill="#40464e"/><rect x="985.0" y="464" width="2" height="2" fill="#40464e"/><rect x="997.0" y="464" width="2" height="2" fill="#40464e"/><rect x="1009.0" y="464" width="2" height="2" fill="#40464e"/><rect x="1021.0" y="464" width="1.2" height="6" fill="#4c5560"/><rect x="1033.0" y="464" width="2" height="2" fill="#40464e"/><rect x="1045.0" y="464" width="2" height="2" fill="#40464e"/><rect x="1057.0" y="464" width="2" height="2" fill="#40464e"/><rect x="1069.0" y="464" width="2" height="2" fill="#40464e"/><rect x="1081.0" y="464" width="2" height="2" fill="#40464e"/><rect x="1093.0" y="464" width="2" height="2" fill="#40464e"/><rect x="1105.0" y="464" width="2" height="2" fill="#40464e"/><rect x="1117.0" y="464" width="2" height="2" fill="#40464e"/><rect x="1129.0" y="464" width="2" height="2" fill="#40464e"/><rect x="1141.0" y="464" width="1.2" height="6" fill="#4c5560"/><rect x="1153.0" y="464" width="2" height="2" fill="#40464e"/><rect x="1165.0" y="464" width="2" height="2" fill="#40464e"/><rect x="1177.0" y="464" width="2" height="2" fill="#40464e"/><rect x="1189.0" y="464" width="2" height="2" fill="#40464e"/><rect x="1201.0" y="464" width="2" height="2" fill="#40464e"/><rect x="1213.0" y="464" width="2" height="2" fill="#40464e"/><rect x="1225.0" y="464" width="2" height="2" fill="#40464e"/><rect x="1237.0" y="464" width="2" height="2" fill="#40464e"/><rect x="1249.0" y="464" width="2" height="2" fill="#40464e"/><rect x="1261.0" y="464" width="1.2" height="6" fill="#4c5560"/><rect x="1273.0" y="464" width="2" height="2" fill="#40464e"/><rect x="1285.0" y="464" width="2" height="2" fill="#40464e"/><rect x="1297.0" y="464" width="2" height="2" fill="#40464e"/><rect x="1309.0" y="464" width="2" height="2" fill="#40464e"/><rect x="1321.0" y="464" width="2" height="2" fill="#40464e"/><rect x="1333.0" y="464" width="2" height="2" fill="#40464e"/><rect x="1345.0" y="464" width="2" height="2" fill="#40464e"/><rect x="1357.0" y="464" width="2" height="2" fill="#40464e"/><rect x="1369.0" y="464" width="2" height="2" fill="#40464e"/><rect x="1381.0" y="464" width="1.2" height="6" fill="#4c5560"/><rect x="1393.0" y="464" width="2" height="2" fill="#40464e"/><rect x="1405.0" y="464" width="2" height="2" fill="#40464e"/><rect x="1417.0" y="464" width="2" height="2" fill="#40464e"/><rect x="1429.0" y="464" width="2" height="2" fill="#40464e"/><rect x="1441.0" y="464" width="2" height="2" fill="#40464e"/><rect x="1453.0" y="464" width="2" height="2" fill="#40464e"/><rect x="1465.0" y="464" width="2" height="2" fill="#40464e"/></svg>
<div class="t" style="left:61px;top:476px;font-size:12.8px;color:#7b8189">00,000</div>
<div class="t" style="left:144.5px;top:476px;font-size:12.8px;color:#7b8189">00:00:05,000</div>
<div class="t" style="left:264.5px;top:476px;font-size:12.8px;color:#7b8189">00:00:10,000</div>
<div class="t" style="left:384.5px;top:476px;font-size:12.8px;color:#7b8189">00:00:15,000</div>
<div class="t" style="left:504.5px;top:476px;font-size:12.8px;color:#7b8189">00:00:20,000</div>
<div class="t" style="left:624.5px;top:476px;font-size:12.8px;color:#7b8189">00:00:25,000</div>
<div class="t" style="left:744.5px;top:476px;font-size:12.8px;color:#7b8189">00:00:30,000</div>
<div class="t" style="left:864.5px;top:476px;font-size:12.8px;color:#7b8189">00:00:35,000</div>
<div class="t" style="left:984.5px;top:476px;font-size:12.8px;color:#7b8189">00:00:40,000</div>
<div class="t" style="left:1104.5px;top:476px;font-size:12.8px;color:#7b8189">00:00:45,000</div>
<div class="t" style="left:1224.5px;top:476px;font-size:12.8px;color:#7b8189">00:00:50,000</div>
<div class="t" style="left:1344.5px;top:476px;font-size:12.8px;color:#7b8189">00:00:55,000</div>
<div class="a" style="left:734px;top:461px;width:3px;height:3px;background:#eef1f4;border-radius:1px;box-shadow:9px 0 0 #eef1f4,18px 0 0 #eef1f4"></div>
<div class="a" style="left:0;top:492px;width:1489px;height:357px;background:#1e2630"></div>
<div class="a" style="left:0;top:492px;width:1472px;height:254px;background:#1b2530"></div>
<div class="a" style="left:2px;top:492px;width:58px;height:94px;background:#1a90d6"></div>
<div class="a" style="left:62px;top:492px;width:1410px;height:94px;background:#1a2028"></div>
<div class="a" style="left:2px;top:589px;width:58px;height:29px;background:#1a90d6"></div>
<div class="a" style="left:62px;top:589px;width:1410px;height:29px;background:#343f4c"></div>
<div class="a" style="left:2px;top:621px;width:58px;height:29px;background:#1a90d6"></div>
<div class="a" style="left:62px;top:621px;width:1410px;height:29px;background:#343f4c"></div>
<div class="a" style="left:2px;top:653px;width:58px;height:29px;background:#1a90d6"></div>
<div class="a" style="left:62px;top:653px;width:1410px;height:29px;background:#343f4c"></div>
<div class="a" style="left:2px;top:685px;width:58px;height:29px;background:#1a90d6"></div>
<div class="a" style="left:62px;top:685px;width:1410px;height:29px;background:#343f4c"></div>
<div class="a" style="left:2px;top:717px;width:58px;height:29px;background:#1a90d6"></div>
<div class="a" style="left:62px;top:717px;width:1410px;height:29px;background:#343f4c"></div>
<div class="a" style="left:1420px;top:492px;width:52px;height:94px;background:#333e4b"></div>
<svg style="left:9px;top:530px" width="19" height="17" viewBox="0 0 19 17"><g fill="#f4f7fa"><circle cx="4" cy="4" r="3.8"/><circle cx="11" cy="4" r="3.8"/><rect x="0.5" y="6.5" width="14" height="10"/><path d="M14 10 L18.5 7 V16.5 L14 13.5z"/></g><circle cx="4" cy="4" r="1.6" fill="#1a90d6"/><circle cx="11" cy="4" r="1.6" fill="#1a90d6"/></svg>
<svg style="left:9px;top:594px" width="20" height="20" viewBox="0 0 20 20"><text x="0" y="15" font-family="Liberation Serif" font-style="italic" font-weight="bold" font-size="18" fill="#f4f7fa">fx</text></svg>
<svg style="left:7px;top:630px" width="22" height="12" viewBox="0 0 22 12"><rect x="0.8" y="0.8" width="20" height="10" fill="none" stroke="#f0f4f8" stroke-width="1.4"/><rect x="7.5" y="1" width="6.5" height="9.6" fill="#8fd0ef"/><path d="M7.5 1v10M14 1v10" stroke="#f0f4f8" stroke-width="1.2"/></svg>
<svg style="left:9px;top:661px" width="18" height="13" viewBox="0 0 18 13"><rect x="0" y="0" width="18" height="13" fill="#f4f7fa"/><path d="M1.5 11.5 L6 6 L9 9 L12 6.5 L16.5 11.5Z" fill="#1a90d6"/><circle cx="12.5" cy="3.5" r="1.5" fill="#1a90d6"/></svg>
<div class="t" style="left:10px;top:690px;font-size:20px;font-weight:bold;font-family:'Liberation Serif',serif;color:#f4f7fa">T</div>
<svg style="left:9px;top:722px" width="19" height="20" viewBox="0 0 19 20"><path d="M5.5 4 L17 1 V14" fill="none" stroke="#f4f7fa" stroke-width="2.4"/><path d="M5.5 4V17" stroke="#f4f7fa" stroke-width="2.4"/><ellipse cx="3.5" cy="17" rx="3.3" ry="2.6" fill="#f4f7fa"/><ellipse cx="15" cy="14" rx="3.3" ry="2.6" fill="#f4f7fa"/></svg>
<div class="a" style="left:62px;top:493px;width:215px;height:93px;background:#3f5396"></div>
<div class="t" style="left:62px;top:532px;width:215px;text-align:center;font-size:14px;color:#f0f2f8">Intro</div>
<div class="a" style="left:1236px;top:493px;width:184px;height:93px;background:#3f5396"></div>
<div class="t" style="left:1236px;top:532px;width:184px;text-align:center;font-size:14px;color:#f0f2f8">Credits</div>
<div class="a" style="left:551px;top:493px;width:47px;height:93px;background:#0d1116"></div>
<div class="a" style="left:973px;top:493px;width:47px;height:93px;background:#0d1116"></div>
<div class="a" style="left:358px;top:496px;width:161px;height:87px;box-shadow:1px 1px 2px #000;overflow:hidden"><svg style="left:0;top:0" width="161" height="87" viewBox="0 0 160 88" preserveAspectRatio="none"><defs><linearGradient id="bst0" x1="0" y1="0" x2="0" y2="1"><stop offset="0" stop-color="#bcc6e4"/><stop offset="1" stop-color="#a8b6dc"/></linearGradient>
<linearGradient id="bwt0" x1="0" y1="0" x2="0" y2="1"><stop offset="0" stop-color="#9caab4"/><stop offset="0.45" stop-color="#b2bec0"/><stop offset="0.75" stop-color="#ccd3cc"/><stop offset="1" stop-color="#e2ddc8"/></linearGradient>
<linearGradient id="bdt0" x1="0" y1="0" x2="0" y2="1"><stop offset="0" stop-color="#e4dfca"/><stop offset="1" stop-color="#e6dcbe"/></linearGradient></defs>
<rect width="160" height="33" fill="url(#bst0)"/>
<ellipse cx="14" cy="8" rx="16" ry="6" fill="#e2e5ee" opacity="0.85"/><ellipse cx="62" cy="5" rx="20" ry="5" fill="#e0e3ec" opacity="0.8"/>
<ellipse cx="80" cy="13" rx="12" ry="4" fill="#dde1ec" opacity="0.7"/><ellipse cx="118" cy="4" rx="22" ry="4" fill="#e2e5ee" opacity="0.7"/>
<ellipse cx="100" cy="16" rx="8" ry="3" fill="#d8dcea" opacity="0.6"/><ellipse cx="40" cy="18" rx="10" ry="2.5" fill="#d6dbe8" opacity="0.5"/>
<rect y="32" width="160" height="1" fill="#8a98a6"/>
<rect y="33" width="160" height="21" fill="url(#bwt0)"/>
<rect y="53" width="160" height="35" fill="url(#bdt0)"/>
<g fill="#a89e88" opacity="0.55"><circle cx="15" cy="60" r="1"/><circle cx="40" cy="70" r="1.2"/><circle cx="90" cy="78" r="1"/><circle cx="120" cy="62" r="1"/><circle cx="140" cy="75" r="1.2"/><circle cx="60" cy="82" r="1"/><circle cx="105" cy="72" r="1"/><circle cx="28" cy="80" r="0.8"/><circle cx="75" cy="66" r="0.8"/><circle cx="150" cy="84" r="1"/><circle cx="130" cy="70" r="0.8"/></g>
<path d="M63 58 Q65 52 68 53 Q71 56 71 70 L65 68Z" fill="#3a2a25"/>
<path d="M62 67 Q66 64 71 67 L72 82 L63 82Z" fill="#c87e74"/></svg></div>
<div class="a" style="left:705px;top:495px;width:161px;height:88px;box-shadow:1px 1px 2px #000;overflow:hidden"><svg style="left:0;top:0" width="161" height="88" viewBox="0 0 160 88" preserveAspectRatio="none"><defs><linearGradient id="wrt1" x1="0" y1="0" x2="0" y2="1"><stop offset="0" stop-color="#aeaeb2"/><stop offset="1" stop-color="#a4a5aa"/></linearGradient></defs>
<rect width="160" height="88" fill="url(#wrt1)"/>
<rect width="160" height="16" fill="#8a8888"/>
<rect width="30" height="7" fill="#d0d0d2"/><rect y="7" width="30" height="10" fill="#5a5a58"/>
<rect x="100" width="60" height="16" fill="#9a8c8a"/>
<path d="M62 44 L98 44 L125 88 L70 88Z" fill="#cacacd"/>
<path d="M0 46 L25 46 L0 62Z" fill="#c2c2c6"/><path d="M140 44 L160 44 L160 54Z" fill="#c2c2c6"/>
<path d="M55 0 L75 0 L70 30 L62 56 L52 55 L56 30Z" fill="#2e4450"/>
<path d="M84 0 L98 0 L104 30 L108 52 L100 54 L94 30Z" fill="#2e4450"/>
<path d="M33 64 Q38 58 44 60 L52 56 L64 58 L65 70 L40 70Z" fill="#2a2a2e"/><path d="M31 62 L40 60 L38 70 L33 68Z" fill="#d8d8da"/><path d="M35 62 L40 70 L65 70 L64 73 L38 72Z" fill="#e0e0e2"/>
<g fill="#dcdcde"><path d="M46 60 L48 59 L52 69 L50 69Z"/><path d="M50 59 L52 58 L56 69 L54 69Z"/></g>
<path d="M88 64 L100 55 L114 58 L113 66 L92 68Z" fill="#2a2a2e"/><path d="M88 64 L92 68 L113 66 L112 68 L88 67Z" fill="#e0e0e2"/></svg></div>
<div class="a" style="left:1024px;top:495px;width:161px;height:88px;box-shadow:1px 1px 2px #000;overflow:hidden"><svg style="left:0;top:0" width="161" height="88" viewBox="0 0 160 88" preserveAspectRatio="none"><defs><linearGradient id="cst2" x1="0" y1="0" x2="1" y2="0.2"><stop offset="0" stop-color="#24488e"/><stop offset="0.55" stop-color="#1a2e64"/><stop offset="1" stop-color="#1a1e3e"/></linearGradient>
<linearGradient id="cbt2" x1="0" y1="0" x2="0" y2="1"><stop offset="0" stop-color="#3a2818"/><stop offset="1" stop-color="#1e140c"/></linearGradient>
<linearGradient id="cht2" x1="0" y1="0" x2="1" y2="0"><stop offset="0" stop-color="#8c6e6a"/><stop offset="0.5" stop-color="#5a4a5a"/><stop offset="1" stop-color="#2a2640"/></linearGradient>
<filter id="cft2" x="-5%" y="-5%" width="110%" height="110%"><feGaussianBlur stdDeviation="0.9"/></filter></defs>
<rect width="160" height="88" fill="url(#cst2)"/>
<g filter="url(#cft2)">
<rect width="160" height="30" fill="url(#cst2)"/>
<path d="M0 16 Q30 10 60 20 Q80 24 100 22 L100 30 Q60 32 0 28Z" fill="#44527a" opacity="0.8"/>
<path d="M0 24 Q40 22 90 28 L90 34 L0 34Z" fill="#4e5270" opacity="0.8"/>
<rect y="30" width="160" height="10" fill="url(#cht2)"/>
<rect y="38" width="160" height="50" fill="url(#cbt2)"/>
<rect y="38" width="160" height="12" fill="#5a4432"/>
<g fill="#f0c878"><rect x="3" y="41" width="5" height="3"/><rect x="12" y="43" width="6" height="3"/><rect x="22" y="40" width="4" height="4"/><rect x="30" y="41" width="10" height="3" fill="#9a9ae8"/><rect x="48" y="39" width="5" height="5"/><rect x="58" y="41" width="6" height="4"/><rect x="68" y="40" width="4" height="5"/><rect x="78" y="39" width="6" height="6"/><rect x="96" y="42" width="5" height="4"/><rect x="114" y="41" width="8" height="5"/><rect x="126" y="42" width="5" height="4"/><rect x="146" y="41" width="6" height="5"/></g>
<g fill="#e89a48"><circle cx="40" cy="58" r="1.5"/><circle cx="60" cy="54" r="1.5"/><circle cx="76" cy="56" r="1.2"/><circle cx="110" cy="52" r="1.5"/><circle cx="120" cy="60" r="1.8"/><circle cx="140" cy="64" r="1.5"/><circle cx="80" cy="80" r="1.5"/><circle cx="130" cy="78" r="1.2"/><circle cx="100" cy="70" r="1.2"/><circle cx="20" cy="66" r="1.2"/></g>
<path d="M0 82 Q30 68 70 60 L108 54 L108 57 L72 63 Q36 72 4 88 L0 88Z" fill="#c8702e" opacity="0.75"/>
<path d="M24 88 Q50 76 88 70 L89 73 Q58 79 34 88Z" fill="#d07a30" opacity="0.55"/>
<path d="M0 54 L14 54 L12 70 L0 72Z" fill="#1e2a3a"/>
<rect x="88" y="4" width="2.5" height="46" fill="#e4e4e8"/><circle cx="89.3" cy="22" r="2.6" fill="#c8c8d0"/>
<rect x="101" y="31" width="7" height="15" fill="#d8d8d4"/><path d="M134 40 Q138 32 142 40 L142 48 L134 48Z" fill="#d8c078"/>
</g></svg></div>
<div class="a" style="left:551px;top:621px;width:47px;height:31px;background:#13181e"></div>
<svg style="left:555px;top:622px" width="31" height="30" viewBox="0 0 31 30"><rect width="31" height="30" fill="#1ea2ea"/><path d="M0 0 H31 L15.5 14Z" fill="#efe6d2"/></svg>
<div class="a" style="left:973px;top:621px;width:47px;height:31px;background:#13181e"></div>
<svg style="left:976px;top:622px" width="31" height="30" viewBox="0 0 31 30"><rect width="31" height="30" fill="#f0dcc0"/><path d="M15.5 2 L29 15 L15.5 28 L2 15Z" fill="#1ea2ea"/><path d="M24 25 L29 22 V28 H22Z" fill="#d05050" opacity="0.6"/></svg>
<div class="a" style="left:810px;top:655px;width:242px;height:28px;background:#a3405f"></div>
<div class="a" style="left:278px;top:687px;width:155px;height:27px;background:#9a40a0"></div>
<div class="t" style="left:278px;top:694px;width:155px;text-align:center;font-size:14px;color:#f2eaf4">Text</div>
<div class="a" style="left:1057px;top:687px;width:191px;height:27px;background:#9a40a0"></div>
<div class="t" style="left:1057px;top:694px;width:191px;text-align:center;font-size:14px;color:#f2eaf4">Text</div>
<div class="a" style="left:381px;top:719px;width:52px;height:27px;background:#3fae5c;overflow:hidden"><div class="t" style="left:-4px;top:7px;font-size:14px;color:#f0f8f2">ot big m</div></div>
<div class="a" style="left:1103px;top:719px;width:83px;height:27px;background:#3fae5c"></div>
<div class="t" style="left:1103px;top:726px;width:83px;text-align:center;font-size:14px;color:#f0f8f2">mosquito</div>
<div class="a" style="left:681px;top:463px;width:2px;height:323px;background:#2696dc"></div>
<div class="a" style="left:1473px;top:492px;width:16px;height:309px;background:#292623"></div>
<svg style="left:1473px;top:496px" width="12" height="8" viewBox="0 0 12 8"><path d="M1 7 L6 2 L11 7" fill="none" stroke="#5a5a58" stroke-width="2"/></svg>
<svg style="left:1473px;top:772px" width="12" height="8" viewBox="0 0 12 8"><path d="M1 1 L6 6 L11 1" fill="none" stroke="#5a5a58" stroke-width="2"/></svg>
<div class="a" style="left:1368px;top:759px;width:100px;height:19px;background:#1a2028"></div>
<svg style="left:1368px;top:759px" width="100" height="19" viewBox="0 0 100 19">
<circle cx="9" cy="9.5" r="8" fill="#8f959b"/><rect x="4" y="8.3" width="10" height="2.4" fill="#1e2630"/>
<rect x="17" y="8.5" width="40" height="2" fill="#2a88c0"/><rect x="57" y="8.8" width="25" height="1.2" fill="#3d454e"/>
<circle cx="57" cy="9.5" r="5" fill="#c5cacf"/>
<circle cx="91" cy="9.5" r="8" fill="#8f959b"/><rect x="86" y="8.3" width="10" height="2.4" fill="#1e2630"/><rect x="89.8" y="4.5" width="2.4" height="10" fill="#1e2630"/></svg>
<div class="a" style="left:62px;top:788px;width:1410px;height:12px;background:#2a2623"></div>
<svg style="left:65px;top:789px" width="8" height="10" viewBox="0 0 8 10"><path d="M6 1 L2 5 L6 9" fill="none" stroke="#5a5a58" stroke-width="1.8"/></svg>
<svg style="left:1458px;top:789px" width="8" height="10" viewBox="0 0 8 10"><path d="M2 1 L6 5 L2 9" fill="none" stroke="#5a5a58" stroke-width="1.8"/></svg>
<div class="a" style="left:7px;top:810px;width:143px;height:32px;background:#6b6b6a"></div>
<svg style="left:13px;top:820px" width="11" height="14" viewBox="0 0 11 14"><path d="M8.5 1.5 L3 7 L8.5 12.5" fill="none" stroke="#f4f4f4" stroke-width="2.4"/></svg>
<div class="t" style="left:50px;top:819px;font-size:14px;color:#f2f2f2">Abort Project</div>
<div class="a" style="left:701px;top:809px;width:87px;height:34px;border:2px solid #2d5f82;background:#1b2430"></div>
<svg style="left:712px;top:816px" width="21" height="21" viewBox="0 0 21 21"><circle cx="10.5" cy="10.5" r="10" fill="#f6f8fa"/><text x="10.5" y="16.5" text-anchor="middle" font-family="Liberation Sans" font-size="16" fill="#10161d">?</text></svg>
<div class="t" style="left:743px;top:819px;font-size:14px;color:#e8ecf0">Help</div>
<div class="a" style="left:1339px;top:810px;width:143px;height:32px;background:#1b8fd6"></div>
<div class="t" style="left:1358px;top:819px;font-size:14px;color:#f4f8fc">Select format</div>
<svg style="left:1465px;top:819px" width="11" height="14" viewBox="0 0 11 14"><path d="M2.5 1.5 L8 7 L2.5 12.5" fill="none" stroke="#f4f8fc" stroke-width="2.4"/></svg>
</body></html>
